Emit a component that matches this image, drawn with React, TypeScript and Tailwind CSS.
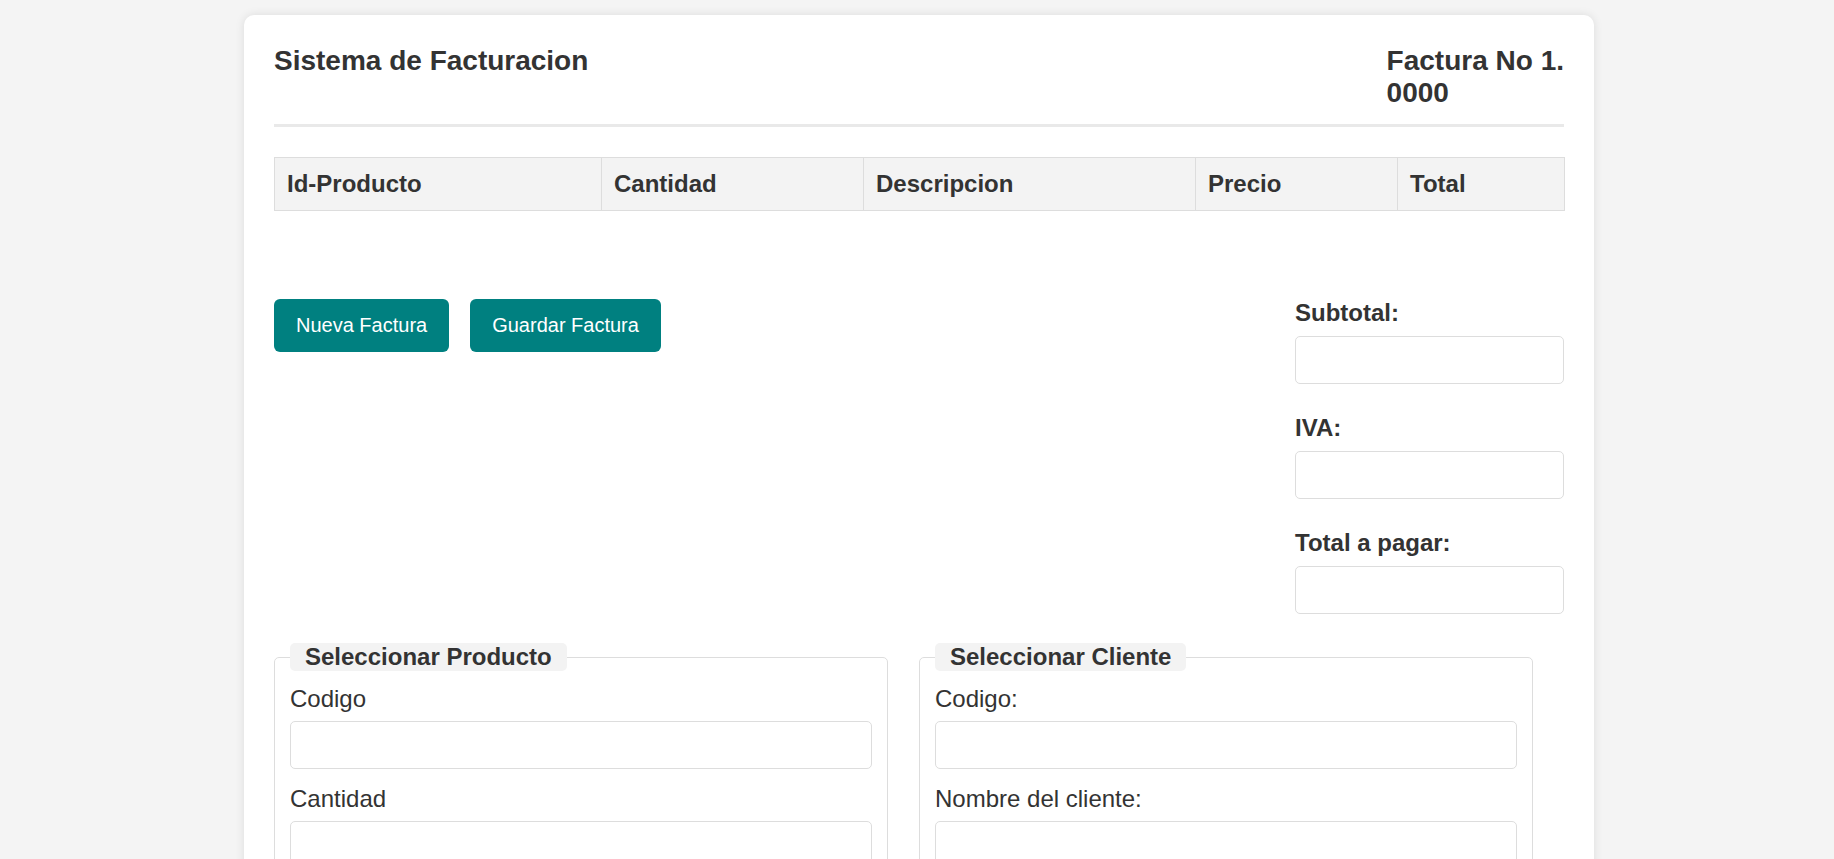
import React from "react";

const columns = [
  { label: "Id-Producto", width: "w-[327px]" },
  { label: "Cantidad", width: "w-[262px]" },
  { label: "Descripcion", width: "w-[332px]" },
  { label: "Precio", width: "w-[202px]" },
  { label: "Total", width: "w-[167px]" },
];

function TotalField({ label, last }: { label: string; last?: boolean }) {
  return (
    <div className={last ? "" : "mb-[30px]"}>
      <label className="mb-[9px] block text-[24px] font-bold">{label}</label>
      <input
        type="text"
        className="block h-12 w-full rounded-[5px] border border-[#dddddd] bg-white px-3 text-[20px] outline-none"
      />
    </div>
  );
}

function Field({ label }: { label: string }) {
  return (
    <div className="mb-4">
      <label className="mb-2 block text-[24px]">{label}</label>
      <input
        type="text"
        className="block h-12 w-full rounded-[5px] border border-[#dddddd] bg-white px-3 text-[20px] outline-none"
      />
    </div>
  );
}

export default function App() {
  return (
    <div className="min-h-screen bg-[#f4f4f4] pt-[15px] pb-10 pl-1 font-['Liberation_Sans',Arial,sans-serif] leading-[normal] text-[#333333]">
      <div className="mx-auto w-[1350px] rounded-[10px] bg-white p-[30px] shadow-[0_0_10px_rgba(0,0,0,0.1)]">
        <header className="flex items-start justify-between border-b-[3px] border-[#e9e9e9] pb-[15px]">
          <h1 className="text-[28px] font-bold">Sistema de Facturacion</h1>
          <h2 className="text-[28px] font-bold">
            Factura No 1.
            <br />
            0000
          </h2>
        </header>

        <table className="mt-[30px] w-full table-fixed border-collapse">
          <thead>
            <tr className="bg-[#f3f3f3]">
              {columns.map((c) => (
                <th
                  key={c.label}
                  className={`${c.width} border border-[#dddddd] px-3 py-3 text-left text-[24px] font-bold`}
                >
                  {c.label}
                </th>
              ))}
            </tr>
          </thead>
          <tbody></tbody>
        </table>

        <div className="mt-[88px] flex items-start justify-between">
          <div className="flex gap-[21px]">
            <button className="rounded-md bg-[#008080] px-[22px] py-[15px] text-[20px] text-white">
              Nueva Factura
            </button>
            <button className="rounded-md bg-[#008080] px-[22px] py-[15px] text-[20px] text-white">
              Guardar Factura
            </button>
          </div>
          <div className="w-[269px]">
            <TotalField label="Subtotal:" />
            <TotalField label="IVA:" />
            <TotalField label="Total a pagar:" last />
          </div>
        </div>

        <div className="mt-[29px] flex gap-[31px]">
          <fieldset className="w-[614px] rounded-[5px] border border-[#dddddd] px-[15px] pt-[14px] pb-[15px]">
            <legend className="rounded-[5px] bg-[#f3f3f3] px-[15px] text-[24px] font-bold">
              Seleccionar Producto
            </legend>
            <Field label="Codigo" />
            <Field label="Cantidad" />
          </fieldset>
          <fieldset className="w-[614px] rounded-[5px] border border-[#dddddd] px-[15px] pt-[14px] pb-[15px]">
            <legend className="rounded-[5px] bg-[#f3f3f3] px-[15px] text-[24px] font-bold">
              Seleccionar Cliente
            </legend>
            <Field label="Codigo:" />
            <Field label="Nombre del cliente:" />
          </fieldset>
        </div>
      </div>
    </div>
  );
}
